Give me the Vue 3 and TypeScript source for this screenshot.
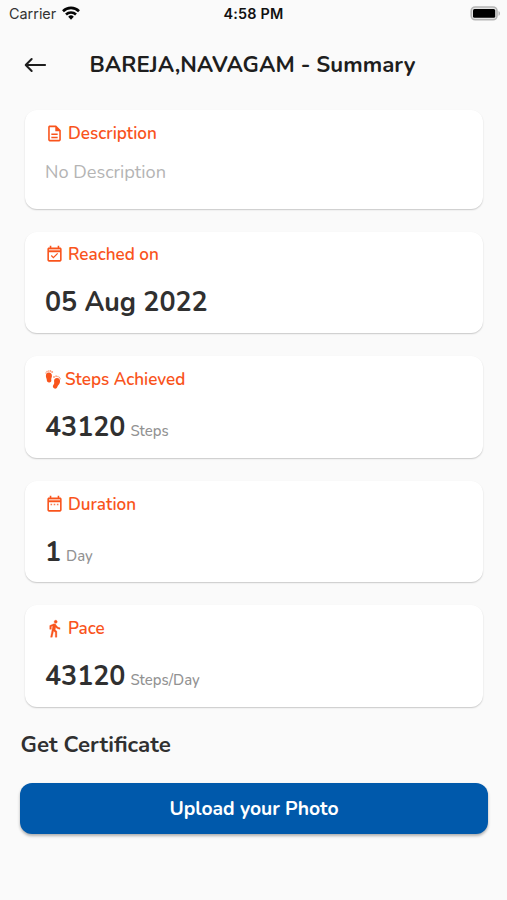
<script setup lang="ts">
type IconName = 'description' | 'reached' | 'steps' | 'duration' | 'pace'

interface SummaryItem {
  icon: IconName
  label: string
  value: string
  unit?: string
}

const items: SummaryItem[] = [
  { icon: 'description', label: 'Description', value: 'No Description' },
  { icon: 'reached', label: 'Reached on', value: '05 Aug 2022' },
  { icon: 'steps', label: 'Steps Achieved', value: '43120', unit: 'Steps' },
  { icon: 'duration', label: 'Duration', value: '1', unit: 'Day' },
  { icon: 'pace', label: 'Pace', value: '43120', unit: 'Steps/Day' },
]
</script>

<template>
  <main class="screen">
    <div class="status">
      <div class="carrier">
        <span>Carrier</span>
        <svg class="wifi" viewBox="0 0 18 14" fill="none" stroke="#050505" stroke-width="2.6">
          <path d="M1 5.2a11.4 11.4 0 0 1 16 0" />
          <path d="M4 8.5a7.2 7.2 0 0 1 10 0" />
          <path d="M6.2 10.7a4 4 0 0 1 5.6 0L9 13.8z" fill="#050505" stroke="none" />
        </svg>
      </div>
      <span class="time">4:58 PM</span>
      <svg class="battery" viewBox="0 0 31 15">
        <rect x="1.2" y="1" width="25.8" height="12.8" rx="4" fill="#e4e4e4" stroke="#b5b5b5" stroke-width="1.6" />
        <rect x="3" y="3" width="22.2" height="8.8" rx="1.5" fill="#000" />
        <path d="M28.5 5c2 .8 2 4 0 4.8z" fill="#b5b5b5" />
      </svg>
    </div>

    <header class="bar">
      <svg class="back" viewBox="0 0 24 18" fill="none" stroke="#1e1e1e" stroke-width="2.1" stroke-linecap="round" stroke-linejoin="round">
        <path d="M22 9H2M8 2.8L1.8 9 8 15.2" />
      </svg>
      <h1 class="title">BAREJA,NAVAGAM - Summary</h1>
    </header>

    <section class="cards">
      <article v-for="item in items" :key="item.icon" class="card" :class="item.icon">
        <div class="label">
          <svg v-if="item.icon === 'description'" class="icon" viewBox="0 0 24 24">
            <path d="M8 16h8v2H8zm0-4h8v2H8zm6-10H6c-1.1 0-2 .9-2 2v16c0 1.1.89 2 1.99 2H18c1.1 0 2-.9 2-2V8l-6-6zm4 18H6V4h7v5h5v11z" />
          </svg>
          <svg v-else-if="item.icon === 'reached'" class="icon" viewBox="0 0 24 24">
            <path d="M5 5h14v3H5z" opacity="0.4" />
            <path d="M16.53 11.06L15.47 10l-4.88 4.88-2.12-2.12-1.06 1.06L10.59 17l5.94-5.94zM19 3h-1V1h-2v2H8V1H6v2H5c-1.11 0-1.99.9-1.99 2L3 19c0 1.1.89 2 2 2h14c1.1 0 2-.9 2-2V5c0-1.1-.9-2-2-2zm0 16H5V9h14v10zM19 7H5V5h14v2z" />
          </svg>
          <svg v-else-if="item.icon === 'steps'" class="icon feet" viewBox="0 0 16 20">
            <path d="M.9 6.3C.7 3.9 2 2.5 3.9 2.6c2.2.1 3.3 1.7 3 3.800-.3 1.500-.9 2.200-.6 3.600.3 1.500-.5 2.400-2 2.500-1.600.1-2.500-.8-2.500-2.400 0-1.500-.8-2.300-.9-3.800z" />
            <path d="M15 12c.3-2.400-.9-4-3-4-2 0-3.200 1.500-2.900 3.500.2 1.500.3 2.200-.6 3.300-1 1.300-.8 2.800.5 3.500 1.500.8 2.700.1 3.300-1.400.5-1.500 2.400-2.800 2.700-4.900z" />
            <g opacity="0.55">
              <circle cx="1" cy="3" r=".75" /><circle cx="2" cy="1.6" r=".8" /><circle cx="3.6" cy="1" r=".85" /><circle cx="5.4" cy="1" r=".9" /><circle cx="7.1" cy="2" r="1" />
              <circle cx="9" cy="7" r="1" /><circle cx="11.1" cy="6.2" r=".9" /><circle cx="12.9" cy="6.5" r=".8" /><circle cx="14.4" cy="7.4" r=".75" /><circle cx="15.2" cy="8.8" r=".7" />
            </g>
          </svg>
          <svg v-else-if="item.icon === 'duration'" class="icon" viewBox="0 0 24 24">
            <path d="M5 5h14v3H5z" opacity="0.4" />
            <path d="M7 11h2v2H7zm4 0h2v2h-2zm4 0h2v2h-2z" opacity="0.75" />
            <path d="M19 3h-1V1h-2v2H8V1H6v2H5c-1.11 0-1.99.9-1.99 2L3 19c0 1.1.89 2 2 2h14c1.1 0 2-.9 2-2V5c0-1.1-.9-2-2-2zm0 16H5V9h14v10zM19 7H5V5h14v2z" />
          </svg>
          <svg v-else class="icon" viewBox="0 0 24 24" stroke="currentColor" stroke-width="0.4">
            <path d="M13.5 5.5c1.1 0 2-.9 2-2s-.9-2-2-2-2 .9-2 2 .9 2 2 2zM9.8 8.9L7 23h2.1l1.8-8 2.1 2v6h2v-7.5l-2.1-2 .6-3C14.8 12 16.8 13 19 13v-2c-1.9 0-3.5-1-4.3-2.4l-1-1.6c-.4-.6-1-1-1.7-1-.3 0-.5.1-.8.1L6 8.3V13h2V9.6l1.8-.7" />
          </svg>
          <span class="name">{{ item.label }}</span>
        </div>
        <div class="reading">
          <span class="value">{{ item.value }}</span>
          <span v-if="item.unit" class="unit">{{ item.unit }}</span>
        </div>
      </article>
    </section>

    <h2 class="subtitle">Get Certificate</h2>
    <button class="upload" type="button"><span>Upload your Photo</span></button>
  </main>
</template>

<style>
body {
  background: #fafafa;
}
</style>

<style scoped>
.screen {
  box-sizing: border-box;
  width: 507px;
  height: 900px;
  overflow: hidden;
  background: #fafafa;
  color: #303030;
  font-family: Nunito, Lato, "Open Sans", sans-serif;
}
.status {
  display: grid;
  grid-template-columns: 1fr auto 1fr;
  align-items: center;
  height: 27px;
  padding: 0 6px 0 9px;
  font-family: Inter, "Liberation Sans", sans-serif;
  font-size: 14.4px;
  color: #111;
}
.carrier {
  display: flex;
  align-items: center;
  gap: 6px;
  color: #333;
}
.wifi {
  width: 18px;
  height: 14px;
  margin-top: -1px;
}
.time {
  font-weight: 600;
  letter-spacing: 0.2px;
  margin-right: 3px;
}
.battery {
  justify-self: end;
  width: 31px;
  height: 15px;
  margin-top: -1px;
}
.bar {
  display: flex;
  align-items: center;
  height: 75px;
  padding-left: 24px;
}
.back {
  width: 23px;
  height: 18px;
}
.title {
  margin: 0 0 0 42.5px;
  font-size: 22.2px;
  line-height: 28px;
  font-weight: 700;
  color: #1e1e1e;
  white-space: nowrap;
}
.cards {
  display: flex;
  flex-direction: column;
  gap: 23px;
  padding: 8px 24px 0 25px;
}
.card {
  box-sizing: border-box;
  height: 101.6px;
  padding: 12px 20px 0;
  border-radius: 12px;
  background: #fff;
  box-shadow: 0 1px 1.5px rgba(0, 0, 0, 0.2);
}
.card.description {
  height: 98.5px;
}
.card.reached {
  padding-top: 11px;
}
.label {
  display: flex;
  align-items: center;
  gap: 4px;
  height: 24px;
  color: #f9541c;
}
.icon {
  width: 19px;
  height: 19px;
  margin-top: -1px;
  fill: currentColor;
}
.icon.feet {
  width: 16px;
  height: 20px;
}
.name {
  font-size: 17.1px;
  line-height: 24px;
  font-weight: 600;
}
.reading {
  display: flex;
  align-items: baseline;
  gap: 5px;
  margin-top: 17px;
  line-height: 36px;
}
.value {
  font-size: 26.8px;
  font-weight: 700;
}
.unit {
  font-size: 14.9px;
  font-weight: 500;
  color: #929292;
}
.description .reading {
  margin-top: 8px;
}
.description .value {
  font-size: 18.2px;
  font-weight: 400;
  color: #b4b4b4;
}
.subtitle {
  margin: 23px 0 0 20.5px;
  font-size: 22.3px;
  line-height: 30px;
  font-weight: 700;
}
.upload {
  display: block;
  width: 467.4px;
  height: 51px;
  margin: 23px 0 0 20.3px;
  padding: 0;
  border: 0;
  border-radius: 12px;
  background: #0059ab;
  box-shadow: 0 2px 3px rgba(0, 0, 0, 0.3);
  color: #fff;
  font: inherit;
  font-size: 19.35px;
  font-weight: 700;
}
</style>
